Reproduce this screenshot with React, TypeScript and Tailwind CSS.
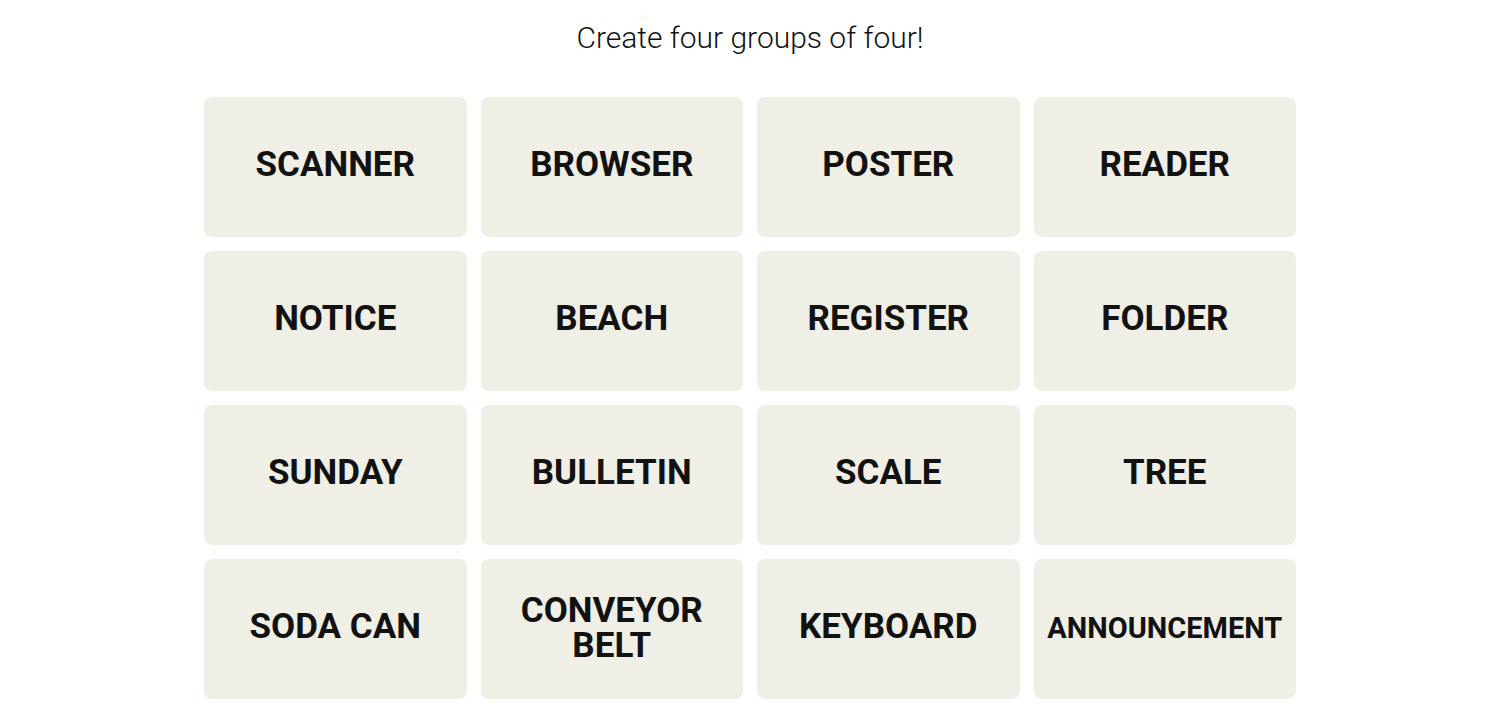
import React from "react";

const words: { w: string; small?: boolean }[] = [
  { w: "SCANNER" }, { w: "BROWSER" }, { w: "POSTER" }, { w: "READER" },
  { w: "NOTICE" }, { w: "BEACH" }, { w: "REGISTER" }, { w: "FOLDER" },
  { w: "SUNDAY" }, { w: "BULLETIN" }, { w: "SCALE" }, { w: "TREE" },
  { w: "SODA CAN" }, { w: "CONVEYOR BELT" }, { w: "KEYBOARD" }, { w: "ANNOUNCEMENT", small: true },
];

export default function App() {
  return (
    <div className="w-[1500px] h-[705px] bg-white overflow-hidden" style={{ fontFamily: "Roboto, 'Liberation Sans', sans-serif" }}>
      <div className="pt-[18px] h-[97px] text-center text-[30px] leading-[40px] text-[#121212] font-light">
        Create four groups of four!
      </div>
      <div className="mx-auto w-[1092px] grid grid-cols-4 gap-x-[14px] gap-y-[14px]">
        {words.map((t) => (
          <div
            key={t.w}
            className={
              "h-[140px] rounded-[8px] bg-[#efefe6] flex items-center justify-center text-center px-2 " +
              (t.w === "CONVEYOR BELT" ? "pb-[3px]" : t.small ? "pb-[2px]" : "pb-[6px]")
            }
          >
            <span
              className={
                "font-bold text-[#121212] uppercase leading-[35px] " +
                (t.small ? "text-[29px]" : "text-[35px]")
              }
              style={t.w === "CONVEYOR BELT" ? { display: "block", maxWidth: 210 } : undefined}
            >
              {t.w}
            </span>
          </div>
        ))}
      </div>
    </div>
  );
}
